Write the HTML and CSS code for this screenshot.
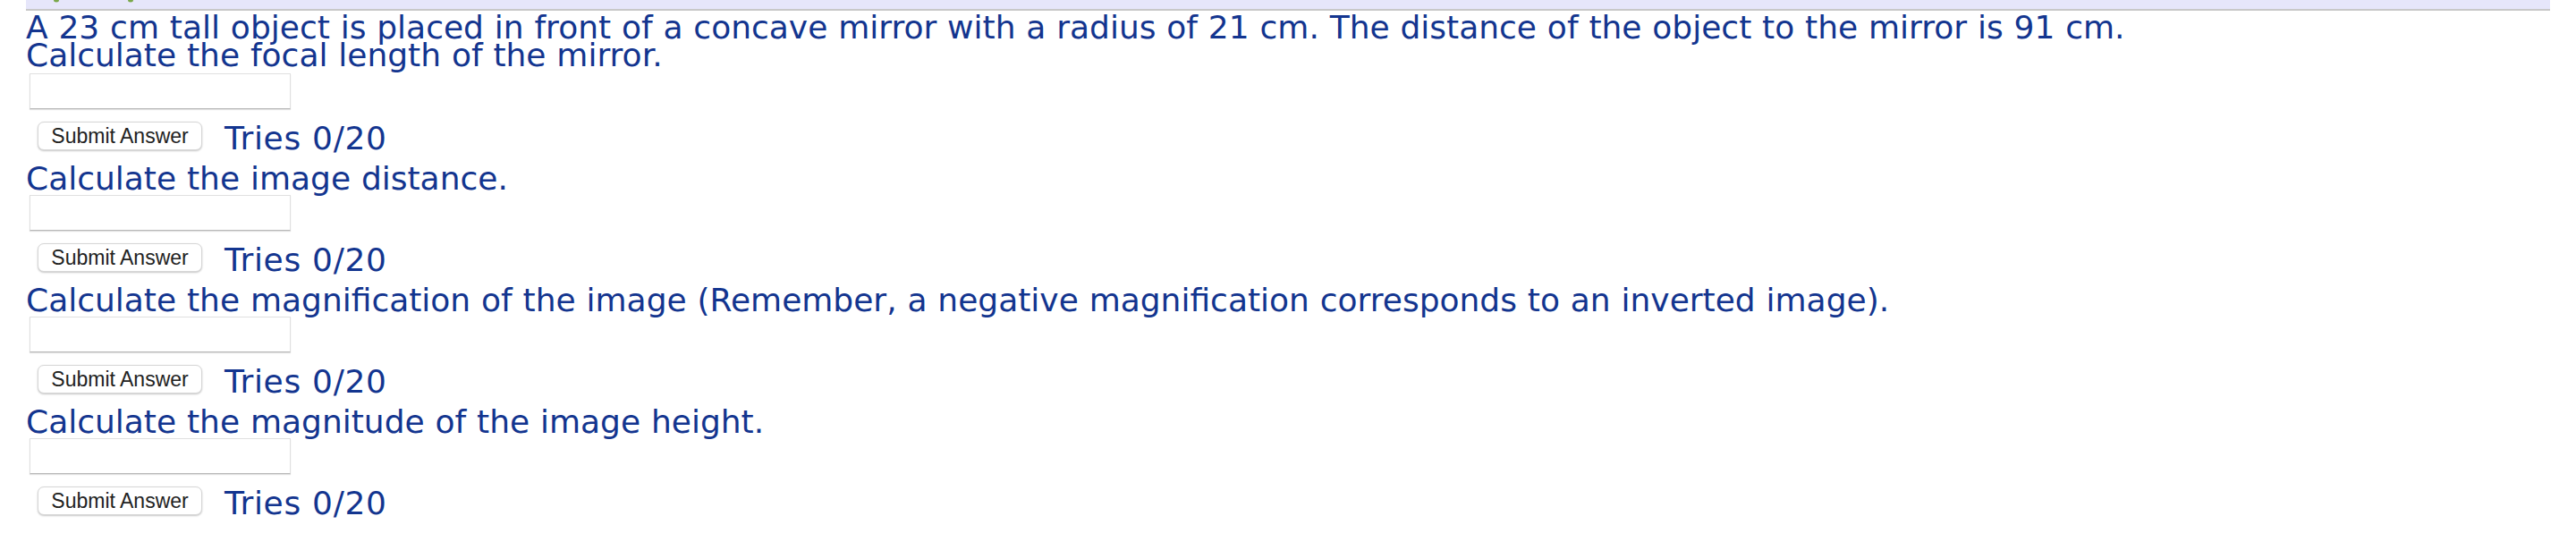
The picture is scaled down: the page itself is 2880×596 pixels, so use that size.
FILE: index.html
```html
<!DOCTYPE html>
<html>
<head>
<meta charset="utf-8">
<link rel="stylesheet" href="styles.css">
<title>Problem</title>
</head>
<body>
<div class="band">
  <svg class="band-marks" width="200" height="10" viewBox="0 0 200 10">
    <ellipse cx="34" cy="0" rx="3" ry="2.5" fill="#7aa84a"/>
    <ellipse cx="117" cy="0" rx="3" ry="2.5" fill="#7aa84a"/>
  </svg>
</div>
<div class="page">
  <div class="block">
    <div class="q">A 23 cm tall object is placed in front of a concave mirror with a radius of 21 cm. The distance of the object to the mirror is 91 cm.<br>Calculate the focal length of the mirror.</div>
    <input class="answer answer-first" type="text">
    <div class="row"><button class="submit">Submit Answer</button><span class="tries">Tries 0/20</span></div>
  </div>
  <div class="block">
    <div class="q">Calculate the image distance.</div>
    <input class="answer" type="text">
    <div class="row"><button class="submit">Submit Answer</button><span class="tries">Tries 0/20</span></div>
  </div>
  <div class="block">
    <div class="q">Calculate the magnification of the image (Remember, a negative magnification corresponds to an inverted image).</div>
    <input class="answer" type="text">
    <div class="row"><button class="submit">Submit Answer</button><span class="tries">Tries 0/20</span></div>
  </div>
  <div class="block">
    <div class="q">Calculate the magnitude of the image height.</div>
    <input class="answer" type="text">
    <div class="row"><button class="submit">Submit Answer</button><span class="tries">Tries 0/20</span></div>
  </div>
</div>
</body>
</html>
```
FILE: styles.css
```css
html, body {
  margin: 0;
  padding: 0;
  background: #ffffff;
}
body {
  font-family: "DejaVu Sans", Verdana, sans-serif;
  color: #13358f;
  overflow: hidden;
}
.band {
  margin-left: 29px;
  width: 2822px;
  height: 10px;
  background: #e6e6fa;
  border-bottom: 2px solid #c8c8c8;
  overflow: hidden;
}
.band-marks {
  display: block;
}
.page {
  padding-left: 29px;
  padding-top: 3px;
}
.block {
  display: flex;
  flex-direction: column;
  align-items: flex-start;
  margin-bottom: 14px;
}
.q {
  font-size: 36px;
  line-height: 31px;
  word-spacing: 0.4px;
  white-space: nowrap;
}
.answer {
  box-sizing: border-box;
  margin: 3px 0 0 4px;
  width: 292px;
  height: 40px;
  background: #ffffff;
  border: 1px solid #e0e0e0;
  border-bottom-color: #b8b8b8;
  box-shadow: 0 1px 1px rgba(0,0,0,0.12);
  border-radius: 0;
  padding: 0;
  outline: none;
}
.answer-first {
  margin-top: 5px;
}
.row {
  display: flex;
  align-items: flex-start;
  height: 48px;
}
.submit {
  box-sizing: border-box;
  margin: 14px 0 0 13px;
  width: 184px;
  height: 32px;
  padding: 0;
  background: #ffffff;
  border: 1px solid #d6d6d6;
  border-radius: 7px;
  box-shadow: 0 1px 2px rgba(0,0,0,0.22);
  font-family: "Liberation Sans", Arial, sans-serif;
  font-size: 23px;
  color: #222222;
  line-height: 30px;
}
.tries {
  margin: 17px 0 0 25px;
  font-size: 36px;
  line-height: 31px;
  letter-spacing: 0.7px;
  white-space: nowrap;
}
```
